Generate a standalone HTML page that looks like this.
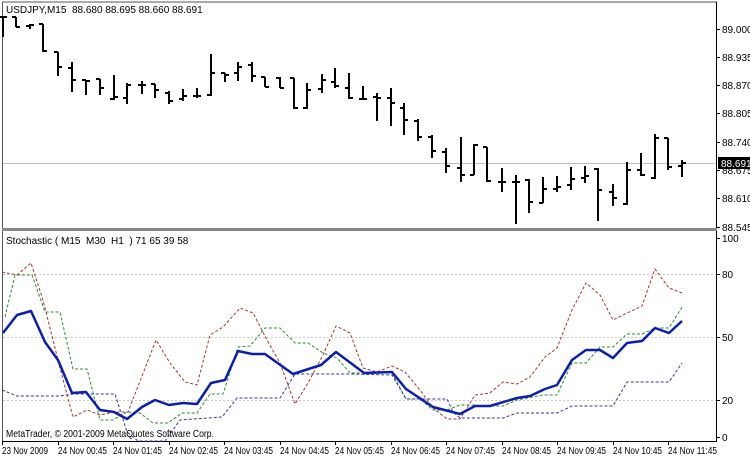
<!DOCTYPE html><html><head><meta charset="utf-8"><style>
body{margin:0;background:#fff;width:750px;height:457px;overflow:hidden;font-family:"Liberation Sans",sans-serif}
svg text{font-family:"Liberation Sans",sans-serif;font-size:10px;fill:#000;white-space:pre}
</style></head><body>
<svg width="750" height="457" viewBox="0 0 750 457" xmlns="http://www.w3.org/2000/svg" xml:space="preserve">
<rect width="750" height="457" fill="#fff"/>
<line x1="2" y1="2" x2="717" y2="2" stroke="#555"/>
<line x1="2.5" y1="2" x2="2.5" y2="441" stroke="#555"/>
<line x1="716.5" y1="2" x2="716.5" y2="441" stroke="#000"/>
<line x1="2" y1="229.5" x2="717" y2="229.5" stroke="#888" stroke-width="3"/>
<line x1="2" y1="441.5" x2="717" y2="441.5" stroke="#000"/>
<line x1="3" y1="163.5" x2="716" y2="163.5" stroke="#c0c0c0"/>
<path fill="none" stroke="#000" stroke-width="2" d="
M3,17V37M-1,17H3M3,17H7
M16,17V27M12,17H16M16,27H20
M30,24V29M26,26H30M30,25H34
M43,24V52M39,24H43M43,51H47
M58,52V76M54,52H58M58,67H62
M72,62V92M68,68H72M72,80H76
M86,80V95M82,80H86M86,81H90
M100,79V95M96,79H100M100,88H104
M114,75V100M110,99H114M114,97H118
M127,83V104M123,98H127M127,85H131
M142,81V94M138,85H142M142,85H146
M155,84V98M151,84H155M155,90H159
M169,91V104M165,93H169M169,101H173
M183,89V101M179,99H183M183,96H187
M197,88V98M193,96H197M197,96H201
M211,54V96M207,95H211M211,73H215
M225,73V82M221,73H225M225,75H229
M238,62V81M234,73H238M238,67H242
M252,62V82M248,65H252M252,76H256
M265,77V87M261,77H265M265,87H269
M280,77V88M276,78H280M280,88H284
M294,78V109M290,78H294M294,108H298
M307,83V109M303,108H307M307,90H311
M322,74V93M318,89H322M322,80H326
M335,68V88M331,82H335M335,86H339
M349,73V99M345,88H349M349,98H353
M363,86V100M359,99H363M363,99H367
M377,93V121M373,97H377M377,98H381
M391,88V126M387,98H391M391,103H395
M404,103V135M400,108H404M404,120H408
M418,119V141M414,121H418M418,137H422
M432,135V158M428,137H432M432,151H436
M446,148V173M442,152H446M446,166H450
M461,137V182M457,168H461M461,175H465
M474,144V175M470,175H474M474,145H478
M487,147V182M483,147H487M487,181H491
M502,168V192M498,182H502M502,182H506
M516,175V224M512,182H516M516,182H520
M529,179V213M525,180H529M529,202H533
M543,177V203M539,203H543M543,189H547
M557,176V192M553,189H557M557,187H561
M571,167V190M567,185H571M571,179H575
M585,166V183M581,178H585M585,176H589
M598,168V221M594,169H598M598,190H602
M613,184V206M609,192H613M613,198H617
M627,162V205M623,204H627M627,170H631
M641,153V176M637,170H641M641,175H645
M655,134V179M651,178H655M655,138H659
M668,138V170M664,138H668M668,167H672
M682,160V177M678,166H682M682,163H686"/>
<text x="6" y="13">USDJPY,M15  88.680 88.695 88.660 88.691</text>
<g stroke="#000"><line x1="716" y1="29.5" x2="720" y2="29.5"/><line x1="716" y1="57.5" x2="720" y2="57.5"/><line x1="716" y1="85.5" x2="720" y2="85.5"/><line x1="716" y1="113.5" x2="720" y2="113.5"/><line x1="716" y1="142.5" x2="720" y2="142.5"/><line x1="716" y1="170.5" x2="720" y2="170.5"/><line x1="716" y1="198.5" x2="720" y2="198.5"/><line x1="716" y1="227.5" x2="720" y2="227.5"/></g>
<g><text x="722" y="33">89.000</text><text x="722" y="61">88.935</text><text x="722" y="89">88.870</text><text x="722" y="117">88.805</text><text x="722" y="146">88.740</text><text x="722" y="174">88.675</text><text x="722" y="202">88.610</text><text x="722" y="231">88.545</text></g>
<rect x="718" y="157" width="32" height="12" fill="#000"/>
<text x="721" y="167" style="fill:#fff">88.691</text>
<g stroke="#c8c8c8" stroke-dasharray="2,2"><line x1="3" y1="274.5" x2="716" y2="274.5"/><line x1="3" y1="337.5" x2="716" y2="337.5"/><line x1="3" y1="400.5" x2="716" y2="400.5"/></g>
<text x="6" y="244">Stochastic ( M15  M30  H1  ) 71 65 39 58</text>
<g fill="none" stroke-width="1" stroke-dasharray="3,2">
<polyline stroke="#a03a30" points="2,272 17,275 31,263 43,300 60,368 73,417 87,410 100,415 115,412 128,412 156,340 170,363 185,382 197,385 210,335 223,327 240,308 253,313 267,340 280,363 295,404 308,383 322,357 336,326 350,333 363,368 377,372 392,366 405,372 420,390 433,408 447,419 460,419 475,395 490,393 503,382 517,384 530,377 545,357 557,348 572,310 586,283 600,295 613,320 627,313 642,306 655,269 669,288 682,293"/>
<polyline stroke="#2e8a2e" points="5,317 15,275 32,275 45,312 60,312 73,369 87,369 100,420 113,420 127,412 140,413 153,423 168,423 182,413 197,413 210,394 223,394 238,347 250,346 265,328 280,328 295,343 308,343 323,353 337,358 350,373 364,373 392,373 406,399 420,399 433,410 447,410 460,405 475,405 480,406 503,406 517,400 543,395 557,395 572,363 586,363 600,347 613,347 627,334 642,334 655,328 669,328 682,307"/>
<polyline stroke="#3535a5" points="2,390 17,396 60,396 73,394 115,394 127,432 138,441 165,441 180,420 222,417 237,398 280,398 295,374 350,374 392,375 406,399 447,399 453,412 460,418 503,418 517,413 557,413 572,406 613,406 627,382 669,382 682,363"/>
</g>
<polyline fill="none" stroke="#0a1eb4" stroke-width="2.5" stroke-linejoin="round" points="3,333 17,315 31,311 45,342 58,360 72,393 86,392 100,410 114,412 127,419 142,407 155,400 169,405 183,403 197,404 211,383 225,380 238,351 252,354 265,354 293,374 321,365 336,352 364,373 392,372 406,389 433,407 460,414 475,406 490,406 517,398 530,396 545,389 557,385 572,360 586,350 600,350 613,358 627,343 642,341 655,328 669,333 682,321"/>
<text x="6" y="437" textLength="208" lengthAdjust="spacingAndGlyphs">MetaTrader, © 2001-2009 MetaQuotes Software Corp.</text>
<g stroke="#000"><line x1="716" y1="238.5" x2="720" y2="238.5"/><line x1="716" y1="274.5" x2="720" y2="274.5"/><line x1="716" y1="337.5" x2="720" y2="337.5"/><line x1="716" y1="400.5" x2="720" y2="400.5"/><line x1="716" y1="437.5" x2="720" y2="437.5"/></g>
<g><text x="722" y="242">100</text><text x="722" y="278">80</text><text x="722" y="341">50</text><text x="722" y="404">20</text><text x="722" y="441">0</text></g>
<g stroke="#000"><line x1="2.5" y1="441" x2="2.5" y2="445"/><line x1="58.5" y1="441" x2="58.5" y2="445"/><line x1="113.5" y1="441" x2="113.5" y2="445"/><line x1="169.5" y1="441" x2="169.5" y2="445"/><line x1="224.5" y1="441" x2="224.5" y2="445"/><line x1="280.5" y1="441" x2="280.5" y2="445"/><line x1="335.5" y1="441" x2="335.5" y2="445"/><line x1="391.5" y1="441" x2="391.5" y2="445"/><line x1="446.5" y1="441" x2="446.5" y2="445"/><line x1="502.5" y1="441" x2="502.5" y2="445"/><line x1="557.5" y1="441" x2="557.5" y2="445"/><line x1="613.5" y1="441" x2="613.5" y2="445"/><line x1="668.5" y1="441" x2="668.5" y2="445"/></g>
<g lengthAdjust="spacingAndGlyphs"><text x="2" y="454" textLength="46" lengthAdjust="spacingAndGlyphs">23 Nov 2009</text><text x="58" y="454" textLength="49" lengthAdjust="spacingAndGlyphs">24 Nov 00:45</text><text x="113" y="454" textLength="49" lengthAdjust="spacingAndGlyphs">24 Nov 01:45</text><text x="169" y="454" textLength="49" lengthAdjust="spacingAndGlyphs">24 Nov 02:45</text><text x="224" y="454" textLength="49" lengthAdjust="spacingAndGlyphs">24 Nov 03:45</text><text x="280" y="454" textLength="49" lengthAdjust="spacingAndGlyphs">24 Nov 04:45</text><text x="335" y="454" textLength="49" lengthAdjust="spacingAndGlyphs">24 Nov 05:45</text><text x="391" y="454" textLength="49" lengthAdjust="spacingAndGlyphs">24 Nov 06:45</text><text x="446" y="454" textLength="49" lengthAdjust="spacingAndGlyphs">24 Nov 07:45</text><text x="502" y="454" textLength="49" lengthAdjust="spacingAndGlyphs">24 Nov 08:45</text><text x="557" y="454" textLength="49" lengthAdjust="spacingAndGlyphs">24 Nov 09:45</text><text x="613" y="454" textLength="49" lengthAdjust="spacingAndGlyphs">24 Nov 10:45</text><text x="668" y="454" textLength="49" lengthAdjust="spacingAndGlyphs">24 Nov 11:45</text></g>
</svg>
</body></html>
